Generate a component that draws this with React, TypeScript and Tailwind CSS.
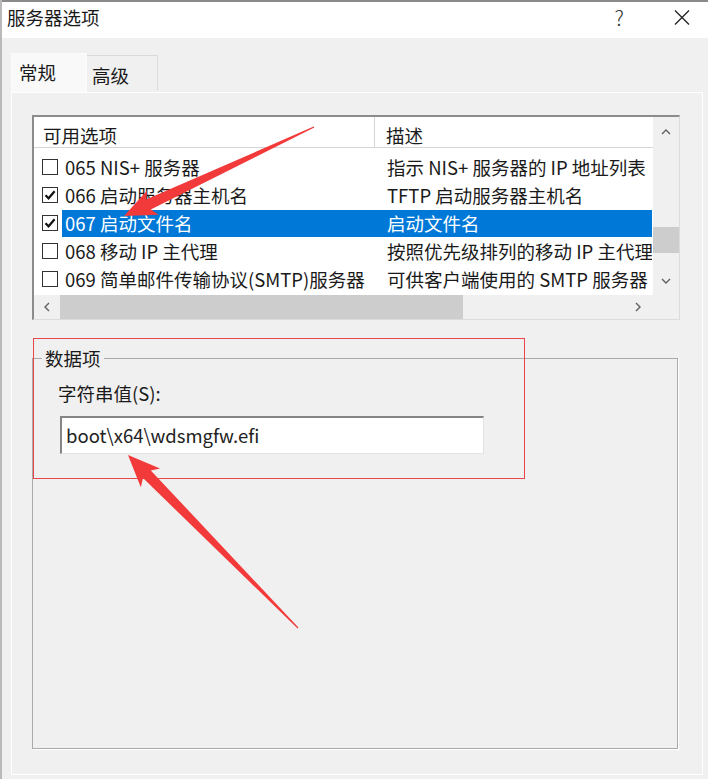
import React from "react";

type Row = { name: string; desc: string; checked: boolean; selected?: boolean };

const rows: Row[] = [
  { name: "065 NIS+ 服务器", desc: "指示 NIS+ 服务器的 IP 地址列表", checked: false },
  { name: "066 启动服务器主机名", desc: "TFTP 启动服务器主机名", checked: true },
  { name: "067 启动文件名", desc: "启动文件名", checked: true, selected: true },
  { name: "068 移动 IP 主代理", desc: "按照优先级排列的移动 IP 主代理", checked: false },
  { name: "069 简单邮件传输协议(SMTP)服务器", desc: "可供客户端使用的 SMTP 服务器", checked: false },
];

function CheckBox({ checked }: { checked: boolean }) {
  return (
    <svg width="16" height="16" viewBox="0 0 16 16">
      <rect x="0.5" y="0.5" width="15" height="15" fill="#fff" stroke="#333" />
      {checked && <path d="M3.5 8.2 L6.6 11.3 L12.6 4.3" fill="none" stroke="#111" strokeWidth="2.2" />}
    </svg>
  );
}

function Chevron({ dir }: { dir: "up" | "down" | "left" | "right" }) {
  const d = {
    up: "M1 6 L5 2 L9 6",
    down: "M1 2 L5 6 L9 2",
    left: "M6 1 L2 5 L6 9",
    right: "M2 1 L6 5 L2 9",
  }[dir];
  const horiz = dir === "up" || dir === "down";
  return (
    <svg width={horiz ? 10 : 8} height={horiz ? 8 : 10} viewBox={horiz ? "0 0 10 8" : "0 0 8 10"}>
      <path d={d} fill="none" stroke="#606060" strokeWidth="1.4" />
    </svg>
  );
}

// tapered annotation arrow, tip -> tail
function arrowPoints(tx: number, ty: number, sx: number, sy: number) {
  const len = Math.hypot(sx - tx, sy - ty);
  const ux = (sx - tx) / len;
  const uy = (sy - ty) / len;
  const nx = -uy;
  const ny = ux;
  const L = 32;
  const W = 13.5;
  const w = 5.5;
  const p = (a: number, b: number) => `${(tx + ux * a + nx * b).toFixed(1)},${(ty + uy * a + ny * b).toFixed(1)}`;
  const q = (b: number) => `${(sx + nx * b).toFixed(1)},${(sy + ny * b).toFixed(1)}`;
  return [p(0, 0), p(L, W), p(L - 5, w), q(0.6), q(-0.6), p(L - 5, -w), p(L, -W)].join(" ");
}

export default function App() {
  return (
    <div className="relative w-[708px] h-[779px] overflow-hidden bg-[#f0f0f0] border-l-2 border-[#b9b9b9] font-['Noto_Sans_CJK_SC',sans-serif] text-[#1a1a1a] text-[18.5px]">
      {/* title bar */}
      <div className="h-[38px] bg-white border-t-2 border-[#8a8a8a] flex items-center pl-[5px] pb-[6px]">
        <span className="leading-[24px]">服务器选项</span>
        <span className="ml-auto mr-[50px] text-[21px] font-light text-[#333] leading-[24px]">?</span>
        <svg className="mr-[18px]" width="16" height="15" viewBox="0 0 16 15">
          <path d="M1 0.5 L15 14.5 M15 0.5 L1 14.5" stroke="#222" strokeWidth="1.3" />
        </svg>
      </div>

      {/* tabs */}
      <div className="flex items-start pl-[9px] pt-[15px] h-[54px]">
        <div className="w-[76px] h-[39px] bg-[#f9f9f9] pl-[7px] pt-[6px] leading-[24px] border-t border-l border-r border-[#fbfbfb]">常规</div>
        <div className="w-[71px] h-[35px] mt-[2px] bg-[#f0f0f0] border-t border-r border-[#dadada] pl-[5px] pt-[7px] leading-[24px]">高级</div>
      </div>

      {/* tab page */}
      <div className="ml-[9px] mr-[5px] h-[683px] border border-white bg-[#f0f0f0] pl-[20px] pt-[22px]">
        {/* list view */}
        <div className="w-[648px] h-[205px] bg-white border-t-2 border-l-2 border-r border-b border-t-[#8c8c8c] border-l-[#8c8c8c] border-r-[#dcdcdc] border-b-[#dcdcdc] flex">
          <div className="w-[619px] flex flex-col">
            <div className="h-[31px] flex border-b border-[#d5d5d5] leading-[24px]">
              <div className="w-[341px] pl-[9px] pt-[6px] border-r border-[#d5d5d5]">可用选项</div>
              <div className="pl-[11px] pt-[6px]">描述</div>
            </div>
            <div className="h-[147px] pt-[5px] flex flex-col">
              {rows.map((r) => (
                <div key={r.name} className="h-[28px] flex items-center">
                  <div className="w-[28px] pl-[8px] flex items-center">
                    <CheckBox checked={r.checked} />
                  </div>
                  <div
                    className={
                      r.selected
                        ? "w-[590px] h-[27px] flex items-center bg-[#0078d7] text-white"
                        : "w-[590px] h-[27px] flex items-center"
                    }
                  >
                    <div className="w-[315px] pl-[3px] overflow-hidden whitespace-nowrap leading-[24px]">{r.name}</div>
                    <div className="w-[275px] pl-[10px] overflow-hidden whitespace-nowrap leading-[24px]">{r.desc}</div>
                  </div>
                </div>
              ))}
            </div>
            {/* horizontal scrollbar */}
            <div className="h-[24px] bg-[#f0f0f0] flex items-center">
              <div className="w-[26px] flex justify-center"><Chevron dir="left" /></div>
              <div className="w-[403px] h-full bg-[#cdcdcd]" />
              <div className="flex-1 flex justify-end pr-[11px]"><Chevron dir="right" /></div>
            </div>
          </div>
          {/* vertical scrollbar */}
          <div className="w-[26px] bg-[#f0f0f0] flex flex-col">
            <div className="h-[178px] flex flex-col">
              <div className="h-[28px] flex items-center justify-center pt-[2px]"><Chevron dir="up" /></div>
              <div className="h-[82px]" />
              <div className="h-[26px] bg-[#cdcdcd]" />
              <div className="flex-1 flex items-end justify-center pb-[10px]"><Chevron dir="down" /></div>
            </div>
          </div>
        </div>

        {/* group box */}
        <fieldset className="mt-[26px] w-[646px] h-[403px] border border-[#aaaaaa] shadow-[1px_1px_0_#ffffff]">
          <legend className="ml-[9px] px-[3px] leading-[24px]">数据项</legend>
          <div className="pl-[25px]">
            <div className="mt-[11px] leading-[24px]">字符串值(S):</div>
            <div className="mt-[11px] ml-[2px] w-[424px] h-[38px] bg-white border-t-2 border-l-2 border-r border-b border-t-[#858585] border-l-[#858585] border-r-[#e3e3e3] border-b-[#e3e3e3] flex items-center pl-[4px] text-[18.5px] text-[#222]">
              boot\x64\wdsmgfw.efi
            </div>
          </div>
        </fieldset>
      </div>

      {/* annotations */}
      <div className="absolute left-[31px] top-[338px] w-[492px] h-[141px] border border-[#e9464b] pointer-events-none" />
      <svg className="absolute left-[-2px] top-0 pointer-events-none" width="708" height="779">
        <polygon points={arrowPoints(124, 216, 314, 127)} fill="#f33a3a" />
        <polygon points={arrowPoints(128, 455, 298, 628)} fill="#f33a3a" />
      </svg>
    </div>
  );
}
